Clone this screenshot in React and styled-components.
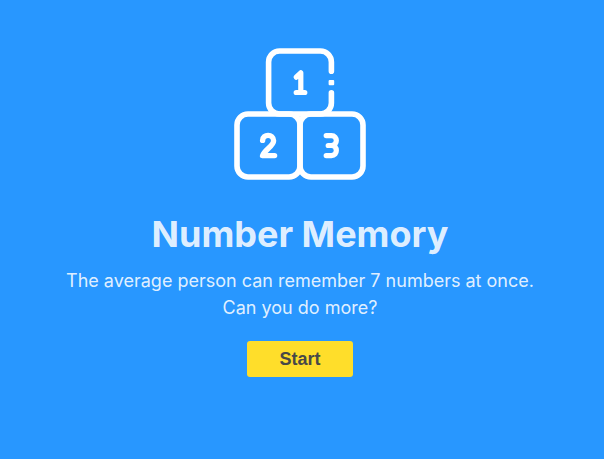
import React from "react";
import styled, { createGlobalStyle } from "styled-components";

const GlobalStyle = createGlobalStyle`
  *, *::before, *::after { box-sizing: border-box; }
  body {
    margin: 0;
    background: #2897ff;
    font-family: Inter, sans-serif;
  }
`;

const Screen = styled.main`
  display: flex;
  flex-direction: column;
  align-items: center;
  min-height: 100vh;
  padding: 48px 4px 48px 0;
  background: #2897ff;
  color: rgba(255, 255, 255, 0.87);
  text-align: center;
`;

const BlocksIcon = styled.svg`
  display: block;
  width: 132px;
  height: 132px;
  fill: none;
  stroke: #fff;
  stroke-width: 5.6;
  stroke-linejoin: round;
`;

const Title = styled.h1`
  margin: 31px 0 0;
  font-size: 36px;
  line-height: 46px;
  font-weight: 700;
`;

const Description = styled.p`
  margin: 10px 0 0;
  font-size: 18px;
  line-height: 27px;
  font-weight: 400;
`;

const StartButton = styled.button`
  margin-top: 20px;
  padding: 0 32px;
  height: 36px;
  border: 0;
  border-radius: 3px;
  background: #ffde2a;
  color: #484848;
  font: 700 18px/36px "Liberation Sans", Arial, sans-serif;
  cursor: pointer;
`;

export default function App() {
  return (
    <>
      <GlobalStyle />
      <Screen>
        <BlocksIcon viewBox="0 0 132 132" aria-hidden="true">
          <path
            d="M97.4 23.2V14A11 11 0 0 0 86.4 3H45.6A11 11 0 0 0 34.6 14V55A11 11 0 0 0 45.6 66H86.4A11 11 0 0 0 97.4 55V44.8"
            strokeLinecap="round"
          />
          <rect x="94.6" y="32" width="5.6" height="5.2" rx="1" fill="#fff" stroke="none" />
          <rect x="3" y="66" width="63" height="63" rx="11" />
          <rect x="66" y="66" width="63" height="63" rx="11" />
          <g strokeLinecap="round">
            <path d="M62.2 29.2L66.8 24.8V44.4M62.2 44.5H70.8" strokeWidth="5.2" />
            <path d="M28.6 92.4C28.6 85.8 39.6 85.6 39.6 92.8C39.6 98 31 101.4 28.6 107.6H40.6" strokeWidth="5.4" />
            <path d="M92.2 87.6H97.4C104 87.6 104 97.5 97.4 97.5H94.2M97.4 97.5C104 97.5 104 107.6 97.4 107.6H92.2" strokeWidth="5.2" />
          </g>
        </BlocksIcon>
        <Title>Number Memory</Title>
        <Description>
          The average person can remember 7 numbers at once.
          <br />
          Can you do more?
        </Description>
        <StartButton type="button">Start</StartButton>
      </Screen>
    </>
  );
}
